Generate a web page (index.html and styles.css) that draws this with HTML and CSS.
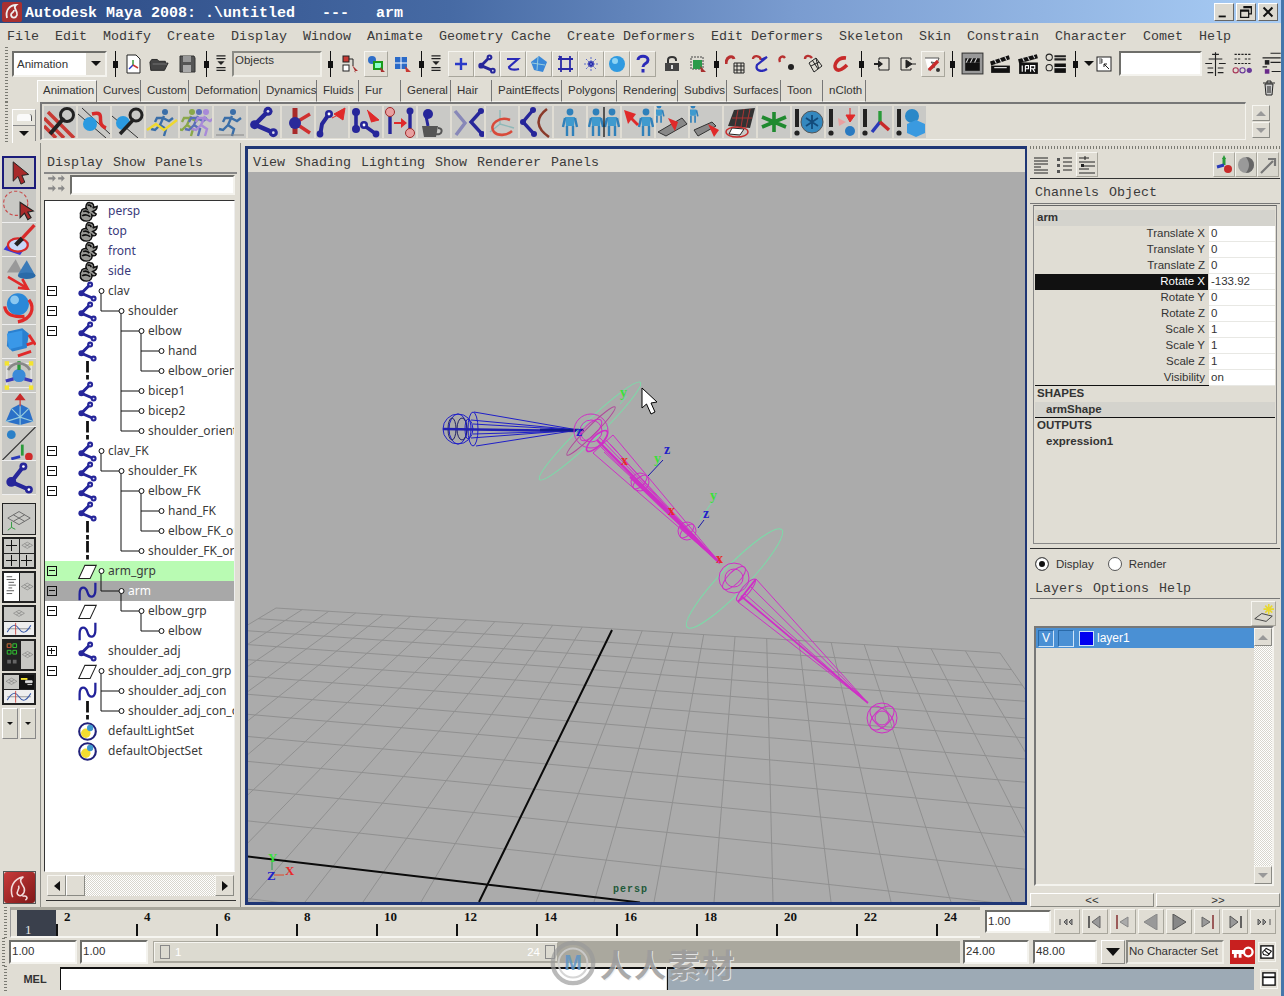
FILE: index.html
```html
<!DOCTYPE html>
<html lang="en">
<head>
<meta charset="utf-8">
<title>Autodesk Maya 2008</title>
<link rel="stylesheet" href="styles.css">
</head>
<body>
<svg class="defs" aria-hidden="true">
  <defs>
    <symbol id="joint" viewBox="0 0 24 24">
      <path d="M15 4 L5 14 L19 20" fill="none" stroke="#26269a" stroke-width="3.4"/>
      <circle cx="15" cy="4" r="3.4" fill="#26269a"/><circle cx="15" cy="4" r="1" fill="#dde"/>
      <circle cx="5" cy="14" r="3.4" fill="#26269a"/>
      <circle cx="19" cy="20" r="3.4" fill="#26269a"/><circle cx="19" cy="20" r="1" fill="#dde"/>
    </symbol>
    <symbol id="cam" viewBox="0 0 24 24">
      <path d="M5 12 C5 9 9 8 11 9 C9 6 11 1 15 2 C19 2 20 6 18 8 L23 6 C23 9 21 11 18 12 L22 15 C21 18 18 17 17 16 C18 20 15 23 11 23 C6 23 3 20 4 16 C3 14 4 13 5 12Z" fill="#9a9a96" stroke="#111" stroke-width="1.7"/>
      <path d="M7 12 C10 11 13 12 14 14 M6 17 C9 15 13 16 15 18 M12 5 C14 4 16 5 16 7" fill="none" stroke="#111" stroke-width="2"/>
    </symbol>
    <symbol id="curve" viewBox="0 0 24 24">
      <path d="M3 22 V15 C3 5 10 6 12 13 C14 20 21 20 21 10 V2" fill="none" stroke="#22229a" stroke-width="2.6"/>
    </symbol>
    <symbol id="group" viewBox="0 0 24 24">
      <path d="M2 20 L9 5 H22 L15 20Z" fill="#fff" stroke="#222" stroke-width="1.2"/>
    </symbol>
    <symbol id="dash" viewBox="0 0 24 24">
      <path d="M12 0 V13 M12 16 V21" stroke="#111" stroke-width="3.2"/>
    </symbol>
    <symbol id="set" viewBox="0 0 24 24">
      <circle cx="12" cy="12" r="9.5" fill="#fff" stroke="#22227a" stroke-width="2.4"/>
      <circle cx="10" cy="14" r="5.4" fill="#f4dc30"/><circle cx="15" cy="8" r="3.6" fill="#3f98cc"/>
    </symbol>
    <symbol id="key" viewBox="0 0 32 32">
      <path d="M0 12 L20 32 M0 20 L12 32 M4 6 L30 32" stroke="#c83a34" stroke-width="3.5"/>
      <path d="M6 28 L20 12" stroke="#222" stroke-width="4"/>
      <circle cx="23" cy="9" r="6.5" fill="none" stroke="#222" stroke-width="3"/>
    </symbol>
    <symbol id="fig" viewBox="0 0 32 32">
      <circle cx="16" cy="6" r="3.4" fill="#2f80ba"/>
      <path d="M11 11 H21 L20 20 H12Z" fill="#3f9ace"/>
      <path d="M11 12 L9 21 M21 12 L23 21 M13 20 V30 M19 20 V30" stroke="#2f80ba" stroke-width="2.4"/>
    </symbol>
    <symbol id="run" viewBox="0 0 32 32">
      <circle cx="19" cy="6" r="3" fill="currentColor"/>
      <path d="M18 10 L14 19 L20 23 L18 30 M14 19 L9 24 L5 23 M17 12 L23 15 L27 12 M17 12 L11 12 L9 16" fill="none" stroke="currentColor" stroke-width="2.4"/>
    </symbol>
    <symbol id="mark" viewBox="0 0 32 32">
      <path d="M5 3 V21" stroke="#222" stroke-width="4"/><circle cx="5" cy="27" r="2.6" fill="#222"/>
    </symbol>
    <symbol id="lst" viewBox="0 0 20 20">
      <path d="M3 3 H17 M3 6 H17 M3 9 H17 M3 12 H10 M3 15 H17 M3 18 H17" stroke="#222" stroke-width="1"/>
    </symbol>
    <symbol id="plane" viewBox="0 0 30 30">
      <path d="M3 14 L15 7 L27 14 L15 21Z M9 10.500 L21 17.500 M21 10.500 L9 17.500" fill="none" stroke="#666" stroke-width="1"/>
    </symbol>
    <symbol id="graph" viewBox="0 0 32 16">
      <path d="M2 8 H30" stroke="#888"/><path d="M2 12 C8 2 12 2 16 8 S24 14 30 4" fill="none" stroke="#3a5aa8" stroke-width="1.2"/><path d="M12 1 V15" stroke="#c83a34"/>
    </symbol>
  </defs>
</svg>

<div class="app">
  <header class="title">
    <svg class="title-logo" viewBox="0 0 20 20"><rect width="20" height="20" rx="2" fill="#a83030"/><path d="M5 16 C3 8 8 3 14 3 C10 6 16 8 15 13 C14 16 10 17 9 13 C9 10 12 11 12 8" fill="none" stroke="#eee" stroke-width="1.8"/></svg>
    <span class="title-text">Autodesk Maya 2008: .\untitled   ---   arm</span>
    <div class="win-btns">
      <span class="win-btn"><svg viewBox="0 0 20 18"><path d="M4 14 H12" stroke="#111" stroke-width="2"/></svg></span>
      <span class="win-btn"><svg viewBox="0 0 20 18"><path d="M7 3 H16 V11 H13 M4 7 H13 V15 H4Z M7 4 H16 M4 8 H13" fill="none" stroke="#111" stroke-width="1.4"/></svg></span>
      <span class="win-btn"><svg viewBox="0 0 20 18"><path d="M5 4 L15 14 M15 4 L5 14" stroke="#111" stroke-width="2.2"/></svg></span>
    </div>
  </header>

  <nav class="menubar mono">
    <span>File</span><span>Edit</span><span>Modify</span><span>Create</span><span>Display</span><span>Window</span><span>Animate</span><span>Geometry Cache</span><span>Create Deformers</span><span>Edit Deformers</span><span>Skeleton</span><span>Skin</span><span>Constrain</span><span>Character</span><span>Comet</span><span>Help</span>
  </nav>

  <div class="status">
    <div class="grip-cell"><i class="grip"></i></div>
    <div class="combo sunken"><span>Animation</span><b class="combo-btn"><i class="tri"></i></b></div>
    <div class="c"><i class="sep"></i></div>
    <div class="c"><svg class="ic" viewBox="0 0 20 20"><path d="M4 1 H13 L17 5 V19 H4Z" fill="#fff" stroke="#222"/><path d="M10 11 V6" stroke="#3a9a3a" stroke-width="1.5"/><path d="M10 11 L6 15" stroke="#2a3ac8" stroke-width="1.5"/><path d="M10 11 L15 14" stroke="#c83a34" stroke-width="1.5"/></svg></div>
    <div class="c"><svg class="ic" viewBox="0 0 22 20"><path d="M1 8 L3 5 H9 L11 7 H18 V9 H21 L17 17 H2Z" fill="#444" stroke="#222"/><path d="M4 10 H20" stroke="#777"/></svg></div>
    <div class="c"><svg class="ic" viewBox="0 0 20 20"><path d="M3 2 H17 L18 4 V18 H3Z" fill="#555" stroke="#333"/><rect x="6" y="2" width="8" height="6" fill="#999"/><rect x="6" y="11" width="8" height="7" fill="#aaa"/></svg></div>
    <div class="c"><i class="sep"></i></div>
    <div class="c"><svg class="ic" viewBox="0 0 14 22"><path d="M2 2 H12 M2 5 H12" stroke="#222" stroke-width="1.4"/><path d="M3 8 H11 L7 12Z" fill="#222"/><path d="M2 15 H12 M2 18 H12" stroke="#222" stroke-width="1.4"/></svg></div>
    <div class="obj sunken-soft">Objects</div>
    <div class="c"><i class="sep"></i></div>
    <div class="c"><svg class="ic" viewBox="0 0 20 20"><rect x="3" y="2" width="6" height="6" fill="#c83a34" stroke="#222"/><rect x="3" y="11" width="6" height="6" fill="#fff" stroke="#222"/><path d="M9 5 H13 V12" fill="none" stroke="#222"/><path d="M12 11 L18 17 L14 17 L16 19Z" fill="#a83030"/></svg></div>
    <div class="c"><span class="tg"><svg class="ic" viewBox="0 0 20 20"><circle cx="6" cy="6" r="4" fill="#2f6ec8"/><rect x="8" y="8" width="8" height="7" fill="#8fc" stroke="#1a9a1a" stroke-width="2"/><path d="M14 13 L19 18 L15 18Z" fill="#a83030"/></svg></span></div>
    <div class="c"><svg class="ic" viewBox="0 0 20 20"><path d="M3 3 H15 V15 H3Z" fill="#2a6ac8"/><path d="M9 3 V15 M3 9 H15" stroke="#fff"/><path d="M13 12 L19 18 L14 18Z" fill="#c83a34"/></svg></div>
    <div class="c"><i class="sep"></i></div>
    <div class="c"><svg class="ic" viewBox="0 0 14 22"><path d="M2 2 H12 M2 5 H12" stroke="#222" stroke-width="1.4"/><path d="M3 8 H11 L7 12Z" fill="#222"/><path d="M2 15 H12 M2 18 H12" stroke="#222" stroke-width="1.4"/></svg></div>
    <i></i>
    <div class="tgb"><svg class="ic" viewBox="0 0 20 20"><path d="M10 4 V16 M4 10 H16" stroke="#2a3ac8" stroke-width="2.4"/></svg></div>
    <div class="tgb"><svg class="ic"><use href="#joint"/></svg></div>
    <div class="tgb"><svg class="ic" viewBox="0 0 20 20"><path d="M4 5 H15 L6 13 C6 16 12 16 16 15" fill="none" stroke="#2a2ab8" stroke-width="2.2"/></svg></div>
    <div class="tgb"><svg class="ic" viewBox="0 0 20 20"><path d="M2 8 L10 2 L18 8 L14 18 L5 16Z" fill="#3a88d8"/><path d="M9 3 L8 16 M3 9 L16 11" stroke="#9cd"/></svg></div>
    <div class="tgb"><svg class="ic" viewBox="0 0 20 20"><path d="M3 5 H18 M3 15 H18 M6 2 V18 M15 2 V18 M6 5 L4 2" fill="none" stroke="#2a2aa8" stroke-width="1.8"/></svg></div>
    <div class="tgb"><svg class="ic" viewBox="0 0 20 20"><circle cx="10" cy="10" r="3" fill="#2a2aa8"/><path d="M10 3 V17 M3 10 H17 M5 5 L15 15 M15 5 L5 15" stroke="#5a6ac8" stroke-dasharray="2 1"/></svg></div>
    <div class="tgb"><svg class="ic" viewBox="0 0 20 20"><circle cx="10" cy="10" r="8" fill="#2f9ae0"/><circle cx="8" cy="7" r="3" fill="#8cd4f4"/></svg></div>
    <div class="tgb"><svg class="ic" viewBox="0 0 20 20"><path d="M5 6 C5 1 15 1 15 6 C15 10 10 9 10 13 M10 15 V18.500" fill="none" stroke="#2a2ab8" stroke-width="3"/></svg></div>
    <div class="c"><svg class="ic" viewBox="0 0 20 20"><path d="M6 9 V6 C6 2 14 2 14 6 V7" fill="none" stroke="#333" stroke-width="2"/><rect x="3" y="9" width="14" height="8" fill="#444"/><rect x="9" y="11" width="2" height="4" fill="#ddd"/></svg></div>
    <div class="c"><svg class="ic" viewBox="0 0 20 20"><rect x="3" y="3" width="12" height="12" fill="none" stroke="#444" stroke-dasharray="2 1"/><rect x="5" y="6" width="9" height="9" fill="#2a9a4a"/><path d="M12 12 L18 18 L13 18Z" fill="#a83030"/></svg></div>
    <div class="c"><i class="sep"></i></div>
    <div class="c"><svg class="ic" viewBox="0 0 20 20"><path d="M1 10 C1 2 8 1 9 5" fill="none" stroke="#b83030" stroke-width="3"/><path d="M9 9 H19 V19 H9Z M12 9 V19 M16 9 V19 M9 12 H19 M9 16 H19" fill="none" stroke="#222"/></svg></div>
    <div class="c"><svg class="ic" viewBox="0 0 20 20"><path d="M2 5 C2 1 9 1 10 6" fill="none" stroke="#b83030" stroke-width="2.4"/><path d="M10 6 L16 3 L6 11 C4 16 10 19 16 15" fill="none" stroke="#2a2ab8" stroke-width="2.2"/></svg></div>
    <div class="c"><svg class="ic" viewBox="0 0 20 20"><path d="M3 8 C1 3 6 1 8 4" fill="none" stroke="#b83030" stroke-width="2.4"/><circle cx="14" cy="13" r="3" fill="#222"/></svg></div>
    <div class="c"><svg class="ic" viewBox="0 0 20 20"><path d="M2 5 C2 1 7 1 9 4" fill="none" stroke="#b83030" stroke-width="2.4"/><path d="M6 9 L13 4 L19 12 L11 18Z M9.500 6.500 L15 15 M13 4.500 L15.500 14 M8 12 L16 8" fill="none" stroke="#222"/></svg></div>
    <div class="c"><svg class="ic" viewBox="0 0 20 20"><path d="M15 4 C6 3 2 12 5 15 C8 18 13 14 16 11" fill="none" stroke="#c82a2a" stroke-width="3.6"/></svg></div>
    <div class="c"><i class="sep"></i></div>
    <div class="c"><svg class="ic" viewBox="0 0 20 20"><path d="M8 4 H18 V16 H8 M8 4 V6 M8 14 V16" fill="none" stroke="#222"/><path d="M3 10 H8" stroke="#222" stroke-width="2"/><path d="M7 6 L12 10 L7 14Z" fill="#222"/></svg></div>
    <div class="c"><svg class="ic" viewBox="0 0 20 20"><path d="M13 4 H3 V16 H13 M13 4 V6 M13 14 V16" fill="none" stroke="#222"/><path d="M8 6 L14 10 L8 14Z M14 10 H18" fill="#222" stroke="#222"/></svg></div>
    <div class="c"><span class="tg"><svg class="ic" viewBox="0 0 20 20"><path d="M2 4 H16 L14 9 L8 8 L12 13 L5 16" fill="#fff" stroke="#555"/><path d="M6 16 L15 7" stroke="#c82a2a" stroke-width="3.2"/><circle cx="15" cy="16" r="2" fill="#333"/></svg></span></div>
    <div class="c"><i class="sep"></i></div>
    <div class="c"><svg class="ic-l" viewBox="0 0 24 24"><rect x="2" y="2" width="20" height="20" fill="#999" stroke="#333"/><rect x="5" y="11" width="14" height="8" fill="#111"/><path d="M5 7 L19 7 L19 11 L5 11Z" fill="#111"/><path d="M8 7 L6 11 M12 7 L10 11 M16 7 L14 11" stroke="#ddd"/></svg></div>
    <div class="c"><svg class="ic-l" viewBox="0 0 24 24"><path d="M2 10 L20 4 L21 8 L3 14Z" fill="#111"/><path d="M6 8 L8 12 M11 7 L13 11 M16 5 L18 9" stroke="#ddd"/><rect x="3" y="14" width="18" height="7" fill="#111"/><path d="M6 16 H18" stroke="#fff"/></svg></div>
    <div class="c"><svg class="ic-l" viewBox="0 0 24 24"><path d="M2 8 L20 3 L21 7 L3 12Z" fill="#111"/><path d="M6 6 L8 10 M11 5 L13 9 M16 3 L18 7" stroke="#ddd"/><rect x="3" y="11" width="18" height="11" fill="#111"/><path d="M6 14 V20 M9 14 V20 H9 M9 14 H12 V17 H9 M14 20 V14 H18 V17 H14 M16 17 L18 20" fill="none" stroke="#fff" stroke-width="1.100"/></svg></div>
    <div class="c"><svg class="ic-l" viewBox="0 0 24 24"><circle cx="5" cy="6" r="3" fill="none" stroke="#222"/><circle cx="5" cy="16" r="3" fill="none" stroke="#222"/><path d="M10 5 H21 M10 8 H21" stroke="#222" stroke-width="2"/><rect x="10" y="12" width="11" height="9" fill="#111"/><path d="M10 16 H21" stroke="#fff"/></svg></div>
    <div class="c"><i class="sep"></i></div>
    <div class="c rv"><i class="tri"></i><svg class="ic-s" viewBox="0 0 16 16"><rect x="1" y="1" width="14" height="14" fill="#fff" stroke="#222"/><path d="M3 3 H6 V7 H3 M6 5 H3" fill="none" stroke="#222" stroke-width=".8"/><path d="M8 8 L13 13 M8 8 H11 M8 8 V11" stroke="#222"/></svg></div>
    <div class="quick sunken"></div>
    <div class="c"><svg class="ic-l" viewBox="0 0 22 22"><path d="M8 3 H14 M5 7 H17 M2 11 H8 M14 11 H20 M4 15 H9 M13 15 H18 M4 19 H9 M13 19 H18 M11 1 V22" stroke="#222"/></svg></div>
    <div class="c"><svg class="ic-l" viewBox="0 0 22 22"><path d="M4 3 H18 M4 7 H9 M13 7 H18 M4 11 H18" stroke="#222" stroke-dasharray="2 1"/><circle cx="5" cy="17" r="2.3" fill="none" stroke="#a83a5a"/><circle cx="11" cy="17" r="2.3" fill="none" stroke="#6a3a9a"/><circle cx="17" cy="17" r="2.3" fill="#6a3a9a"/></svg></div>
    <div class="c"><svg class="ic-l" viewBox="0 0 22 22"><path d="M11 2 H20 M4 6 H20 M11 10 H20 M4 14 H8 M12 18 H20" stroke="#222"/><rect x="6" y="8" width="4" height="4" fill="#222"/><rect x="6" y="16" width="4" height="4" fill="#6a2a8a"/></svg></div>
  </div>

  <div class="tabsrow">
    <div class="grip-cell"><i class="grip"></i></div>
    <div class="tabs">
      <span class="tab active">Animation</span><span class="tab">Curves</span><span class="tab">Custom</span><span class="tab">Deformation</span><span class="tab">Dynamics</span><span class="tab">Fluids</span><span class="tab">Fur</span><span class="tab">General</span><span class="tab">Hair</span><span class="tab">PaintEffects</span><span class="tab">Polygons</span><span class="tab">Rendering</span><span class="tab">Subdivs</span><span class="tab">Surfaces</span><span class="tab">Toon</span><span class="tab">nCloth</span>
    </div>
    <svg class="trash" viewBox="0 0 14 16"><path d="M3 4 H11 L10 15 H4Z M1 3 H13 M5 3 V1 H9 V3 M6 6 V13 M8 6 V13" fill="#ccc" stroke="#222"/></svg>
  </div>

  <div class="shelfrow">
    <div class="grip-cell"><i class="grip"></i></div>
    <div class="shelf-menu"><b class="shelf-a"></b><b class="shelf-b"><i class="tri"></i></b></div>
    <div class="shelf">
      <svg class="si"><use href="#key"/></svg>
      <svg class="si" viewBox="0 0 32 32"><path d="M0 8 L28 32 M4 2 L32 28" stroke="#333"/><circle cx="12" cy="18" r="7" fill="#2a9ae0"/><path d="M14 8 C30 4 16 18 28 22" fill="none" stroke="#d82a2a" stroke-width="3.5"/></svg>
      <svg class="si" viewBox="0 0 32 32"><path d="M0 10 L26 32" stroke="#333"/><circle cx="11" cy="17" r="7" fill="#2a9ae0"/><path d="M8 28 L22 13" stroke="#222" stroke-width="3.5"/><circle cx="24" cy="9" r="6" fill="none" stroke="#222" stroke-width="3"/></svg>
      <svg class="si run-blue" viewBox="0 0 32 32"><use href="#run"/><path d="M1 24 L10 18 L18 24 L31 14" fill="none" stroke="#eed830" stroke-width="2.4"/></svg>
      <svg class="si" viewBox="0 0 32 32"><use href="#run" x="-7" class="run-green"/><use href="#run" class="run-navy"/><use href="#run" x="7" class="run-purple"/></svg>
      <svg class="si run-blue" viewBox="0 0 32 32"><use href="#run"/><path d="M2 29 H30" stroke="#888"/></svg>
      <svg class="si"><use href="#joint"/></svg>
      <svg class="si" viewBox="0 0 32 32"><path d="M13 2 L13 28" stroke="#a82a2a" stroke-width="5"/><path d="M13 17 L28 8 M13 17 L28 27" stroke="#d03030" stroke-width="3.4"/><circle cx="13" cy="17" r="6" fill="#2a2a9a"/></svg>
      <svg class="si" viewBox="0 0 32 32"><path d="M13 8 L6 18 L4 30" fill="none" stroke="#26269a" stroke-width="4"/><circle cx="13" cy="8" r="4" fill="#26269a"/><circle cx="13" cy="8" r="1.400" fill="#fff"/><circle cx="4" cy="28" r="3.4" fill="#26269a"/><path d="M18 8 L29 2 L27 14Z M16 12 L24 8" fill="#e02a2a" stroke="#e02a2a"/></svg>
      <svg class="si" viewBox="0 0 32 32"><path d="M6 5 L6 22 M12 18 L26 28" stroke="#26269a" stroke-width="3.6"/><circle cx="6" cy="6" r="4" fill="#26269a"/><circle cx="6" cy="23" r="4" fill="#26269a"/><circle cx="14" cy="19" r="4" fill="#26269a"/><circle cx="14" cy="19" r="1.400" fill="#fff"/><circle cx="26" cy="28" r="3.4" fill="#26269a"/><path d="M17 4 L29 14 L21 16 M18 6 L26 12" fill="#e02a2a" stroke="#e02a2a"/></svg>
      <svg class="si" viewBox="0 0 32 32"><path d="M6 6 V28 M26 6 V28" stroke="#26269a" stroke-width="3.4"/><circle cx="6" cy="6" r="4.500" fill="#e8a0a0" stroke="#a02a2a"/><circle cx="26" cy="5" r="3.500" fill="#26269a"/><circle cx="26" cy="27" r="4.500" fill="#e8a0a0" stroke="#a02a2a"/><path d="M10 16 H17 V12 L23 17 L17 22 V18 H10Z" fill="#e02a2a"/></svg>
      <svg class="si" viewBox="0 0 32 32"><path d="M8 10 L10 20" stroke="#26269a" stroke-width="3"/><circle cx="10" cy="8" r="5" fill="#26269a"/><path d="M4 20 H20 L18 31 H6Z" fill="#555"/><path d="M20 22 C26 22 24 30 18 28" fill="none" stroke="#555" stroke-width="2"/></svg>
      <svg class="si" viewBox="0 0 32 32"><path d="M3 5 L13 17 L4 29" fill="none" stroke="#8888b8" stroke-width="3.4"/><path d="M29 5 L19 16 L30 28" fill="none" stroke="#26269a" stroke-width="3.4"/><circle cx="29" cy="5" r="3" fill="#26269a"/><circle cx="30" cy="28" r="3" fill="#26269a"/></svg>
      <svg class="si" viewBox="0 0 32 32"><path d="M14 18 L14 4 M14 18 L4 26 M14 18 L28 22" stroke="#8fb8b8" stroke-width="1.400"/><path d="M24 14 C14 10 2 18 8 26 C12 30 20 30 26 25" fill="none" stroke="#d84a3a" stroke-width="2.6"/></svg>
      <svg class="si" viewBox="0 0 32 32"><path d="M13 4 L3 16 L14 28" fill="none" stroke="#26269a" stroke-width="3.4"/><circle cx="13" cy="4" r="3" fill="#26269a"/><circle cx="3" cy="16" r="3" fill="#26269a"/><circle cx="14" cy="28" r="3" fill="#26269a"/><path d="M27 3 C15 12 16 22 29 31" fill="none" stroke="#8a3a2a" stroke-width="2.6"/></svg>
      <svg class="si"><use href="#fig"/></svg>
      <svg class="si" viewBox="0 0 32 32"><use href="#fig" x="-8" width="32" height="32"/><use href="#fig" x="8" width="32" height="32"/><path d="M16 1 V31" stroke="#222" stroke-width="1.400"/></svg>
      <svg class="si" viewBox="0 0 32 32"><use href="#fig" x="8" width="32" height="32"/><path d="M2 4 L14 8 L11 12 L17 18 L15 20 L9 14 L6 18Z" fill="#e02a2a"/></svg>
      <svg class="si" viewBox="0 0 32 32"><use href="#fig" x="-8" y="-4" width="22" height="22"/><path d="M2 26 L26 12 L31 18 L10 30Z" fill="#888" stroke="#333"/><path d="M12 12 L22 16 L19 25 L16 20Z" fill="#e02a2a"/></svg>
      <svg class="si" viewBox="0 0 32 32"><use href="#fig" x="-8" y="-4" width="22" height="22"/><path d="M4 24 L22 16 L26 20 L8 30Z" fill="#888" stroke="#333"/><path d="M18 18 L29 24 L24 31Z" fill="#e02a2a"/></svg>
      <svg class="si" viewBox="0 0 32 32"><path d="M10 4 L31 2 L26 22 L4 20Z" fill="#333"/><path d="M14 4 L11 20 M20 3 L17 21 M26 3 L22 22 M8 12 L28 12" stroke="#a33"/><path d="M8 22 L20 23 L16 29 L5 28Z" fill="#fff" stroke="#222"/><ellipse cx="13" cy="26" rx="11" ry="5" fill="none" stroke="#c82a2a" stroke-width="1.400"/></svg>
      <svg class="si" viewBox="0 0 32 32"><path d="M16 6 V26 M4 11 L28 21 M4 21 L28 11" stroke="#1f8a2f" stroke-width="3.6"/></svg>
      <svg class="si" viewBox="0 0 32 32"><use href="#mark"/><circle cx="20" cy="16" r="11" fill="#3488bf" stroke="#555"/><path d="M20 9 V23 M14 12 L26 20 M14 20 L26 12" stroke="#124a7a" stroke-width="1.800"/></svg>
      <svg class="si" viewBox="0 0 32 32"><use href="#mark"/><circle cx="24" cy="25" r="5" fill="#2a7ac0"/><path d="M12 12 L20 16 L13 20Z" fill="#e8a0a0"/><path d="M24 2 V12 M20 9 L24 16 L29 9Z" fill="#e02a2a" stroke="#e02a2a"/></svg>
      <svg class="si" viewBox="0 0 32 32"><use href="#mark"/><path d="M20 16 V5" stroke="#2a9a3a" stroke-width="3.4"/><path d="M20 16 L12 26" stroke="#2a3ab8" stroke-width="3.4"/><path d="M20 16 L29 24" stroke="#c82a2a" stroke-width="3.4"/></svg>
      <svg class="si" viewBox="0 0 32 32"><use href="#mark"/><circle cx="18" cy="10" r="7" fill="#2a88c8"/><path d="M13 18 L22 14 L31 18 V27 L22 31 L13 27Z" fill="#3a9ae0"/></svg>
    </div>
    <div class="shelf-scroll"><b class="up-btn"><i class="tri-u"></i></b><b class="up-btn"><i class="tri-d"></i></b></div>
  </div>

  <main class="main">
    <aside class="tools">
      <div class="tool sel"><svg viewBox="0 0 30 30"><path d="M9 4 L9 24 L14 19 L17 27 L21 25 L18 18 L25 17Z" fill="#a82a2a" stroke="#222"/></svg></div>
      <div class="tool"><svg viewBox="0 0 30 30"><ellipse cx="12" cy="13" rx="11" ry="11" fill="none" stroke="#c84a4a" stroke-dasharray="3 2"/><path d="M16 12 L16 26 L20 22 L23 28 L26 26 L23 21 L28 20Z" fill="#a82a2a" stroke="#222"/></svg></div>
      <div class="tool"><svg viewBox="0 0 30 30"><path d="M1 24 L9 14 L24 18 L16 29Z" fill="#3a3ad8"/><ellipse cx="14" cy="20" rx="9" ry="6" fill="#c8d8f8" stroke="#d82a2a" stroke-width="2"/><path d="M14 18 L29 2" stroke="#d82a2a" stroke-width="3"/><path d="M12 20 L18 14" stroke="#222" stroke-width="4"/></svg></div>
      <div class="tool"><svg viewBox="0 0 30 30"><path d="M4 14 L12 2 L18 14Z" fill="#999"/><path d="M14 16 L22 3 L30 17Z" fill="#3a7ab8"/><ellipse cx="22" cy="17" rx="8" ry="3" fill="#2a6aa8"/><path d="M5 18 L22 28 M18 20 L23 29 L14 28" fill="none" stroke="#e02a2a" stroke-width="2.400"/></svg></div>
      <div class="tool"><svg viewBox="0 0 30 30"><circle cx="14" cy="12" r="10" fill="#2a88d8"/><circle cx="11" cy="8" r="4" fill="#8cc8f0"/><path d="M2 14 C3 22 10 24 20 23 M24 8 C30 16 26 26 14 28" fill="none" stroke="#e02a2a" stroke-width="3"/></svg></div>
      <div class="tool"><svg viewBox="0 0 30 30"><path d="M5 6 L18 3 L24 8 L22 21 L9 24 L4 19Z" fill="#2a80d0"/><path d="M4 8 L18 5 L18 19 L6 22Z" fill="#3a98e8"/><path d="M24 9 L30 18 M22 18 L28 16 M14 28 L26 24" stroke="#e02a2a" stroke-width="2.600"/></svg></div>
      <div class="tool"><svg viewBox="0 0 30 30"><rect x="4" y="4" width="22" height="22" fill="none" stroke="#eee"/><circle cx="15" cy="15" r="6" fill="#3a8ad8"/><path d="M15 2 V10" stroke="#2a9a3a" stroke-width="3"/><path d="M3 20 L10 18" stroke="#3a3ab8" stroke-width="3"/><path d="M20 18 L27 20" stroke="#3a3ab8" stroke-width="3"/><path d="M5 10 C10 2 20 2 25 10" fill="none" stroke="#888" stroke-width="2.400"/><g fill="#f4e430"><rect x="2" y="2" width="4" height="4"/><rect x="24" y="2" width="4" height="4"/><rect x="2" y="24" width="4" height="4"/><rect x="24" y="24" width="4" height="4"/></g></svg></div>
      <div class="tool"><svg viewBox="0 0 30 30"><path d="M3 26 L8 14 L16 10 L24 14 L28 26 L16 29Z" fill="#2a70c8"/><path d="M8 14 L16 22 L24 14 M16 10 V29 M3 26 L16 22 L28 26" stroke="#9cd" fill="none"/><path d="M16 12 V4 M12 6 L16 1 L20 6Z" fill="#c82a2a" stroke="#c82a2a"/></svg></div>
      <div class="tool"><svg viewBox="0 0 30 30"><circle cx="8" cy="7" r="4" fill="#2a80c8"/><path d="M0 30 L30 0" stroke="#333"/><path d="M18 16 V26" stroke="#2a9a3a" stroke-width="2.500"/><path d="M16 27 L8 29" stroke="#2a3ab8" stroke-width="2.500"/><circle cx="24" cy="27" r="3.500" fill="#d02a2a"/></svg></div>
      <div class="tool"><svg viewBox="0 0 30 30"><path d="M19 5 L8 19 L24 26" fill="none" stroke="#26269a" stroke-width="3.800"/><circle cx="19" cy="5" r="3.600" fill="#26269a"/><circle cx="19" cy="5" r="1.200" fill="#fff"/><circle cx="8" cy="19" r="4.500" fill="#26269a"/><circle cx="24" cy="26" r="3.600" fill="#26269a"/><circle cx="24" cy="26" r="1.200" fill="#fff"/></svg></div>
      <div class="layouts">
        <div class="lay"><svg viewBox="0 0 30 30"><use href="#plane"/><path d="M7 24 V18 M7 24 L3 27 M7 24 L11 26" stroke="#2a9a3a"/></svg></div>
        <div class="lay grid4"><i class="pl cross"></i><i class="pl"><svg viewBox="0 0 30 30"><use href="#plane"/></svg></i><i class="pl cross"></i><i class="pl cross"></i></div>
        <div class="lay two-h"><i class="white-l"><svg viewBox="0 0 14 30"><path d="M2 4 H8 M2 7 H12 M4 10 H10 M4 13 H12 M4 16 H8 M2 19 H10 M2 22 H8" stroke="#555"/></svg></i><i><svg viewBox="0 0 30 30"><use href="#plane"/></svg></i></div>
        <div class="lay two-v"><i><svg viewBox="0 0 30 30"><use href="#plane"/></svg></i><i class="wh"><svg viewBox="0 0 32 16"><use href="#graph"/></svg></i></div>
        <div class="lay two-h"><i class="dark-l"><svg viewBox="0 0 14 30"><path d="M2 3 H6 V7 H2Z M8 3 H12 V7 H8Z M2 10 H6 V14 H2Z M8 10 H12 V14 H8Z" fill="none" stroke="#3c3"/><path d="M2 3 H6 V7 H2Z" fill="none" stroke="#c33"/><path d="M2 20 H6 V24 H2Z M8 20 H12 V24 H8Z" fill="#666"/></svg></i><i><svg viewBox="0 0 30 30"><use href="#plane"/></svg></i></div>
        <div class="lay two-v"><i class="sub-h"><svg viewBox="0 0 30 30"><use href="#plane"/></svg><b class="black-box"><svg viewBox="0 0 16 12"><path d="M2 2 H9 V4 H2Z" fill="#f4e430"/><path d="M7 5 H14 V7 H7Z M9 9 H14" fill="#ddd" stroke="#ddd"/></svg></b></i><i class="wh"><svg viewBox="0 0 32 16"><use href="#graph"/></svg></i></div>
        <div class="lay-arrows"><b><i class="tri-s"></i></b><b><i class="tri-s"></i></b></div>
      </div>
      <div class="logo"><svg viewBox="0 0 32 32"><defs><linearGradient id="lg" x1="0" y1="0" x2="1" y2="1"><stop offset="0" stop-color="#c83a3a"/><stop offset="1" stop-color="#801818"/></linearGradient></defs><rect width="32" height="32" rx="3" fill="url(#lg)"/><path d="M9 26 C5 16 10 7 20 5 C14 9 19 12 21 17 C22 22 17 27 14 23 C12 20 17 18 15 14 M19 25 C24 24 25 27 22 29" fill="none" stroke="#f2dcdc" stroke-width="1.600"/></svg></div>
    </aside>

    <section class="outliner">
      <div class="pmenu mono out-menu"><span>Display</span><span>Show</span><span>Panels</span></div>
      <div class="filter">
        <svg class="filter-ic" viewBox="0 0 18 18"><path d="M1 2 H5 V0 L8 3 L5 6 V4 H1Z M10 2 H13 V0 L16 3 L13 6 V4 H10Z M1 11 H5 V9 L8 12 L5 15 V13 H1Z M10 11 H13 V9 L16 12 L13 15 V13 H10Z" fill="#888"/></svg>
        <div class="filter-in sunken"></div>
      </div>
      <div class="listbox">
        <div class="rows">
          <div class="row d0"><i class="nx"></i><svg class="ri"><use href="#cam"/></svg><span class="nm blue">persp</span></div>
          <div class="row d0"><i class="nx"></i><svg class="ri"><use href="#cam"/></svg><span class="nm blue">top</span></div>
          <div class="row d0"><i class="nx"></i><svg class="ri"><use href="#cam"/></svg><span class="nm blue">front</span></div>
          <div class="row d0"><i class="nx"></i><svg class="ri"><use href="#cam"/></svg><span class="nm blue">side</span></div>
          <div class="row d0"><i class="ex"></i><svg class="ri"><use href="#joint"/></svg><span class="nm">clav</span></div>
          <div class="row d1"><i class="ex"></i><svg class="ri"><use href="#joint"/></svg><span class="nm">shoulder</span></div>
          <div class="row d2"><i class="ex"></i><svg class="ri"><use href="#joint"/></svg><span class="nm">elbow</span></div>
          <div class="row d3"><i class="nx"></i><svg class="ri"><use href="#joint"/></svg><span class="nm">hand</span></div>
          <div class="row d3"><i class="nx"></i><svg class="ri"><use href="#dash"/></svg><span class="nm">elbow_orient</span></div>
          <div class="row d2"><i class="nx"></i><svg class="ri"><use href="#joint"/></svg><span class="nm">bicep1</span></div>
          <div class="row d2"><i class="nx"></i><svg class="ri"><use href="#joint"/></svg><span class="nm">bicep2</span></div>
          <div class="row d2"><i class="nx"></i><svg class="ri"><use href="#dash"/></svg><span class="nm">shoulder_orient</span></div>
          <div class="row d0"><i class="ex"></i><svg class="ri"><use href="#joint"/></svg><span class="nm">clav_FK</span></div>
          <div class="row d1"><i class="ex"></i><svg class="ri"><use href="#joint"/></svg><span class="nm">shoulder_FK</span></div>
          <div class="row d2"><i class="ex"></i><svg class="ri"><use href="#joint"/></svg><span class="nm">elbow_FK</span></div>
          <div class="row d3"><i class="nx"></i><svg class="ri"><use href="#joint"/></svg><span class="nm">hand_FK</span></div>
          <div class="row d3"><i class="nx"></i><svg class="ri"><use href="#dash"/></svg><span class="nm">elbow_FK_orient</span></div>
          <div class="row d2"><i class="nx"></i><svg class="ri"><use href="#dash"/></svg><span class="nm">shoulder_FK_orient</span></div>
          <div class="row d0 green"><i class="ex"></i><svg class="ri"><use href="#group"/></svg><span class="nm">arm_grp</span></div>
          <div class="row d1 picked"><i class="ex"></i><svg class="ri"><use href="#curve"/></svg><span class="nm">arm</span></div>
          <div class="row d2"><i class="ex"></i><svg class="ri"><use href="#group"/></svg><span class="nm">elbow_grp</span></div>
          <div class="row d3"><i class="nx"></i><svg class="ri"><use href="#curve"/></svg><span class="nm">elbow</span></div>
          <div class="row d0"><i class="ex plus"></i><svg class="ri"><use href="#joint"/></svg><span class="nm">shoulder_adj</span></div>
          <div class="row d0"><i class="ex"></i><svg class="ri"><use href="#group"/></svg><span class="nm">shoulder_adj_con_grp</span></div>
          <div class="row d1"><i class="nx"></i><svg class="ri"><use href="#curve"/></svg><span class="nm">shoulder_adj_con</span></div>
          <div class="row d1"><i class="nx"></i><svg class="ri"><use href="#dash"/></svg><span class="nm">shoulder_adj_con_orient</span></div>
          <div class="row d0"><i class="nx"></i><svg class="ri"><use href="#set"/></svg><span class="nm">defaultLightSet</span></div>
          <div class="row d0"><i class="nx"></i><svg class="ri"><use href="#set"/></svg><span class="nm">defaultObjectSet</span></div>
        </div>
        <svg class="tree" viewBox="44 202 189 600">
          <path d="M100 292 V312 H120 V432 H140 M120 332 H140 V372 H160 M140 352 H160 M120 392 H140 M120 412 H140 M100 452 V472 H120 V552 H140 M120 492 H140 V532 H160 M140 512 H160 M100 572 V592 H120 V612 H140 V632 H160 M100 672 V712 H120 M100 692 H120" fill="none" stroke="#111"/>
          <g fill="#fff" stroke="#111">
            <circle cx="100.500" cy="292" r="2.500"/><circle cx="120.500" cy="312" r="2.500"/><circle cx="140.500" cy="332" r="2.500"/><circle cx="160.500" cy="352" r="2.500"/><circle cx="160.500" cy="372" r="2.500"/><circle cx="140.500" cy="392" r="2.500"/><circle cx="140.500" cy="412" r="2.500"/><circle cx="140.500" cy="432" r="2.500"/>
            <circle cx="100.500" cy="452" r="2.500"/><circle cx="120.500" cy="472" r="2.500"/><circle cx="140.500" cy="492" r="2.500"/><circle cx="160.500" cy="512" r="2.500"/><circle cx="160.500" cy="532" r="2.500"/><circle cx="140.500" cy="552" r="2.500"/>
            <circle cx="100.500" cy="572" r="2.500"/><circle cx="120.500" cy="592" r="2.500"/><circle cx="140.500" cy="612" r="2.500"/><circle cx="160.500" cy="632" r="2.500"/>
            <circle cx="100.500" cy="672" r="2.500"/><circle cx="120.500" cy="692" r="2.500"/><circle cx="120.500" cy="712" r="2.500"/>
          </g>
        </svg>
      </div>
      <div class="hscroll"><b class="up-btn"><i class="tri-l"></i></b><b class="thumb"></b><span class="track"></span><b class="up-btn"><i class="tri-r"></i></b></div>
      <div class="foot-line"></div>
    </section>

    <section class="viewport">
      <div class="pmenu mono wide"><span>View</span><span>Shading</span><span>Lighting</span><span>Show</span><span>Renderer</span><span>Panels</span></div>
      <svg class="view3d" viewBox="248 172 777 730">
        <g stroke="#909090" stroke-width="1" fill="none">
          <path d="M276 608 L1000 653 M258 618.700 L1011 669.500 M248 630.800 L1022 685 M248 644.600 L1030 701.600 M248 659.700 L1030 719.100 M248 676.100 L1030 738.200 M248 694.300 L1030 759.400 M248 714.300 L1030 782.600 M248 736.500 L1030 808.500 M248 761.400 L1030 837.400 M248 789.300 L1030 869.700 M248 820.900 L1030 906.500 M248 898.500 L280 902.500"/>
          <path d="M276 608 L-214 902 M302.200 609.600 L-156.500 902 M328.800 611.300 L-98.800 902 M355.700 613 L-41 902 M382.900 614.700 L17 902 M410.300 616.400 L74.500 902 M438.200 618.200 L132.400 902 M466.300 619.900 L190 902 M494.800 621.700 L247.700 902 M523.500 623.400 L305 902 M552.700 625.200 L363 902 M582.200 627.100 L421 902 M642.200 630.700 L536 902 M672.800 632.600 L594 902 M703.700 634.500 L654 902 M735 636.500 L714 902 M766.700 638.500 L773 902 M798.800 640.500 L831 902 M831.200 642.500 L891 902 M864.200 644.600 L951 902 M897.600 646.700 L1012 902 M931.200 648.800 L1060 902 M965.400 650.900 L1114 902 M1000 653 L1172 902"/>
        </g>
        <path d="M612 630 L479 902 M248 856.600 L640 902.500" stroke="#0a0a0a" stroke-width="2" fill="none"/>

        <g fill="none" stroke="#1f1fc8">
          <circle cx="458" cy="429" r="15"/><ellipse cx="458" cy="429" rx="9" ry="15"/><ellipse cx="462" cy="429" rx="5" ry="11" stroke="#222266"/><ellipse cx="452" cy="429" rx="4" ry="11" stroke="#222266"/><ellipse cx="473" cy="429" rx="5" ry="17"/><ellipse cx="468" cy="429" rx="3" ry="10"/>
          <path d="M474 412 L578 430 L476 446 M471 420 L578 430 L471 438 M473 424 L578 430 M473 434 L578 431"/><path d="M443 429 L578 431" stroke-width="2.600" stroke="#2020b0"/>
          <path d="M540 430 H584" stroke="#111a8a" stroke-width="2.400"/>
        </g>
        <ellipse cx="590" cy="431" rx="70" ry="9" transform="rotate(-44 590 431)" fill="none" stroke="#7adca8"/>
        <ellipse cx="734.500" cy="578.500" rx="68" ry="13" transform="rotate(-46 734.500 578.500)" fill="none" stroke="#7adca8"/>
        <g fill="none" stroke="#cf2fc6">
          <circle cx="591" cy="431" r="17"/><circle cx="591" cy="431" r="11"/><ellipse cx="591" cy="431" rx="34" ry="4.500" transform="rotate(-45 591 431)" stroke="#b04a9a"/><ellipse cx="591" cy="430" rx="14" ry="6" transform="rotate(-45 591 430)"/>
          <path d="M593 453 L613 435 L720 563 Z M600 446 L720 563 M606 440 L720 563 M599 437 L720 563"/><path d="M597 440 L720 563" stroke-width="2.400"/><path d="M604 452 L690 532 M610 444 L680 522"/>
          <ellipse cx="597" cy="441" rx="14" ry="5" transform="rotate(-45 597 441)" stroke-width="1.600"/>
          <circle cx="640" cy="482" r="9"/><ellipse cx="640" cy="482" rx="9" ry="4" transform="rotate(-45 640 482)"/><path d="M630 477 L720 563" stroke-width="2"/>
          <circle cx="687" cy="531" r="9"/><ellipse cx="687" cy="531" rx="9" ry="4" transform="rotate(-45 687 531)"/><path d="M680 526 L718 561" stroke-width="2.600"/>
          <circle cx="734" cy="578" r="15"/><circle cx="734" cy="578" r="9"/><ellipse cx="734" cy="578" rx="15" ry="6" transform="rotate(-45 734 578)"/>
          <path d="M738 602 L756 579 L868 703 Z M745 594 L868 703 M750 586 L868 703"/><path d="M741 596 L868 703" stroke-width="1.800"/><path d="M738 602 L756 579" stroke-width="2"/><ellipse cx="746" cy="590" rx="14" ry="4" transform="rotate(-50 746 590)"/>
          <circle cx="882" cy="718" r="15"/><circle cx="882" cy="718" r="7"/><ellipse cx="882" cy="718" rx="15" ry="8" transform="rotate(45 882 718)"/><ellipse cx="882" cy="718" rx="15" ry="8" transform="rotate(-45 882 718)"/>
        </g>
        <path d="M648 476 L663 460 M698 528 L704 520" stroke="#1a1aa8" fill="none"/><path d="M620 404 L627 396 M700 520 L712 502" stroke="#7adca8" fill="none"/>
        <g class="ax">
          <text x="620" y="397" class="ay">y</text><text x="654" y="463" class="ay">y</text><text x="710" y="500" class="ay">y</text>
          <text x="664" y="454" class="az">z</text><text x="703" y="518" class="az">z</text><text x="576" y="436" class="az">z</text>
          <text x="621" y="465" class="ar">x</text><text x="668" y="515" class="ar">x</text><text x="716" y="563" class="ar">x</text>
        </g>
        <path d="M642 388 V408 L646.500 404 L651 414 L655 412 L651 403 L657 402Z" fill="#fff" stroke="#000"/>
        <path d="M272 860 V870" stroke="#2aa050" fill="none"/><path d="M274 875 H284" stroke="#e04a2a"/>
        <text x="268" y="862" class="ay big">Y</text><text x="267" y="880" class="az big">Z</text><text x="285" y="875" class="ar big">X</text>
        <text x="613" y="892" class="persp">persp</text>
      </svg>
    </section>

    <aside class="right">
      <div class="grip-h"></div>
      <div class="cb-tools">
        <svg class="ic"><use href="#lst"/></svg>
        <svg class="ic" viewBox="0 0 20 20"><path d="M9 3 H18 M9 7 H18 M9 11 H18 M9 15 H18" stroke="#222"/><path d="M3 3 H6 V6 H3Z M3 9 H6 V12 H3Z M3 15 H6 V18 H3Z" fill="#555"/></svg>
        <span class="tg2"><svg class="ic" viewBox="0 0 20 20"><path d="M2 3 H12 M2 7 H18 M2 14 H12 M2 18 H18 M8 1 V5 M6 11 H18" stroke="#222"/><rect x="4" y="9" width="3" height="3" fill="#222"/></svg></span>
        <i class="fill"></i>
        <div class="rbs">
          <span class="rb"><svg class="ic" viewBox="0 0 20 20"><path d="M10 10 V3" stroke="#2a9a3a" stroke-width="3"/><path d="M10 10 L3 12" stroke="#2a3ab8" stroke-width="3"/><circle cx="14" cy="14" r="4" fill="#c82a2a"/><path d="M8 4 L10 0 L12 4Z" fill="#2a9a3a"/></svg></span>
          <span class="rb"><svg class="ic" viewBox="0 0 20 20"><circle cx="10" cy="10" r="8" fill="#999"/><path d="M10 2 A8 8 0 0 1 10 18 C14 12 14 8 10 2Z" fill="#666"/></svg></span>
          <span class="rb"><svg class="ic" viewBox="0 0 20 20"><path d="M3 18 L15 6 M10 4 H17 V11" fill="none" stroke="#777" stroke-width="2.200"/></svg></span>
        </div>
      </div>
      <div class="pmenu mono cb-menu"><span>Channels</span><span>Object</span></div>
      <div class="cb">
        <div class="cb-head">arm</div>
        <div class="ch"><label>Translate X</label><span>0</span></div>
        <div class="ch"><label>Translate Y</label><span>0</span></div>
        <div class="ch"><label>Translate Z</label><span>0</span></div>
        <div class="ch hot"><label>Rotate X</label><span>-133.92</span></div>
        <div class="ch"><label>Rotate Y</label><span>0</span></div>
        <div class="ch"><label>Rotate Z</label><span>0</span></div>
        <div class="ch"><label>Scale X</label><span>1</span></div>
        <div class="ch"><label>Scale Y</label><span>1</span></div>
        <div class="ch"><label>Scale Z</label><span>1</span></div>
        <div class="ch last"><label>Visibility</label><span>on</span></div>
        <div class="cb-sec">SHAPES</div>
        <div class="cb-shape">armShape</div>
        <div class="cb-sec">OUTPUTS</div>
        <div class="cb-item">expression1</div>
      </div>
      <div class="layers">
        <div class="radios"><label class="rad on">Display</label><label class="rad">Render</label></div>
        <div class="pmenu mono ly-menu"><span>Layers</span><span>Options</span><span>Help</span></div>
        <div class="ly-tool"><span class="rb newlayer"><svg viewBox="0 0 24 24"><path d="M2 18 L10 12 L22 15 L15 21Z" fill="none" stroke="#333"/><path d="M18 1 V13 M12 7 H24 M14 3 L22 11 M22 3 L14 11" stroke="#e8d830" stroke-width="1.800"/></svg></span></div>
        <div class="ly-list">
          <div class="ly-main">
            <div class="ly-row"><b class="cell">V</b><b class="cell"></b><b class="swatch"></b><span>layer1</span></div>
          </div>
          <div class="vscroll"><b class="up-btn"><i class="tri-u"></i></b><span class="track"></span><b class="up-btn"><i class="tri-d"></i></b></div>
        </div>
        <div class="pager"><b>&lt;&lt;</b><b>&gt;&gt;</b></div>
      </div>
    </aside>
  </main>

  <div class="timeline-row">
    <div class="grip-cell"><i class="grip"></i></div>
    <div class="timeline">
      <div class="cur">1</div>
      <div class="fr">2</div><div class="fr">4</div><div class="fr">6</div><div class="fr">8</div><div class="fr">10</div><div class="fr">12</div><div class="fr">14</div><div class="fr">16</div><div class="fr">18</div><div class="fr">20</div><div class="fr">22</div><div class="fr">24</div>
    </div>
    <div class="field now sunken">1.00</div>
    <div class="pb">
      <b><svg viewBox="0 0 20 16"><path d="M3 5 V11 M7 8 L10 5 V11Z M12 8 L15 5 V11Z" fill="#999" stroke="#555"/></svg></b>
      <b><svg viewBox="0 0 20 16"><path d="M4 2 V14" stroke="#444" stroke-width="1.600"/><path d="M7 8 L15 2 V14Z" fill="#999" stroke="#666"/></svg></b>
      <b><svg viewBox="0 0 20 16"><path d="M4 1 V15" stroke="#8a3a3a" stroke-width="1.600"/><path d="M7 8 L15 3 V13Z" fill="#aaa" stroke="#888"/></svg></b>
      <b><svg viewBox="0 0 20 16"><path d="M3 8 L16 0 V16Z" fill="#999" stroke="#888"/></svg></b>
      <b><svg viewBox="0 0 20 16"><path d="M17 8 L4 0 V16Z" fill="#888" stroke="#555"/></svg></b>
      <b><svg viewBox="0 0 20 16"><path d="M16 1 V15" stroke="#8a3a3a" stroke-width="1.600"/><path d="M13 8 L5 3 V13Z" fill="#999" stroke="#666"/></svg></b>
      <b><svg viewBox="0 0 20 16"><path d="M16 2 V14" stroke="#444" stroke-width="1.600"/><path d="M13 8 L5 2 V14Z" fill="#999" stroke="#555"/></svg></b>
      <b><svg viewBox="0 0 20 16"><path d="M17 5 V11 M13 8 L10 5 V11Z M8 8 L5 5 V11Z" fill="#999" stroke="#555"/></svg></b>
    </div>
  </div>

  <div class="range-row">
    <div class="grip-cell"><i class="grip"></i></div>
    <div class="field f68 sunken">1.00</div>
    <div class="field f68 sunken">1.00</div>
    <div class="slider">
      <div class="slide-on"><i class="hd"></i><span>1</span><i class="flex1"></i><span>24</span><i class="hd"></i></div>
    </div>
    <div class="field f66 sunken">24.00</div>
    <div class="field f64 sunken">48.00</div>
    <b class="r-arrow"><i class="tri big-tri"></i></b>
    <div class="charset sunken-soft">No Character Set</div>
    <b class="keybtn"><svg viewBox="0 0 24 18"><path d="M1 7 H13 V11 H11 V15 H8 V11 H6 V15 H3 V11 H1Z" fill="#fff"/><circle cx="18" cy="9" r="4.500" fill="none" stroke="#fff" stroke-width="2.400"/></svg></b>
    <b class="cbtn"><svg viewBox="0 0 16 16"><rect x="1" y="1" width="14" height="14" fill="#fff" stroke="#111" stroke-width="1.600"/><path d="M3 8 L7 4 L13 7 L9 12 L4 11Z M5 6 L11 11" fill="none" stroke="#111" stroke-width="1.200"/></svg></b>
  </div>

  <div class="cmd-row">
    <div class="grip-cell"><i class="grip"></i></div>
    <b class="mel">MEL</b>
    <div class="cmd-in"></div>
    <div class="cmd-out"></div>
    <b class="cbtn w-btn"><svg viewBox="0 0 16 16"><rect x="1" y="1" width="14" height="14" fill="#fff" stroke="#111" stroke-width="1.600"/><path d="M1 6 H15" stroke="#111" stroke-width="2"/></svg></b>
  </div>

  <div class="wm" aria-hidden="true">
    <svg class="wm-logo" viewBox="0 0 52 52"><circle cx="26" cy="26" r="21" fill="none" stroke="#9a9a9a" stroke-width="4.500" opacity=".8"/><circle cx="26" cy="26" r="15" fill="none" stroke="#cfcfcf" stroke-width="2"/><text x="26" y="33" class="wm-m">M</text></svg>
    <span class="wm-txt">人人素材</span>
  </div>
</div>
</body>
</html>
```
FILE: styles.css
```css
* { box-sizing: border-box; }
html, body { margin: 0; padding: 0; }
body { width: 1284px; height: 996px; overflow: hidden; background: #e0ddd4; font-family: "Liberation Sans", "Noto Sans", sans-serif; font-size: 11.5px; color: #333; }
.defs { display: block; width: 0; height: 0; }
i, b { font-style: normal; font-weight: normal; display: block; }
.mono { font-family: "Liberation Mono", monospace; font-size: 13.33px; color: #3a3a3a; white-space: pre; }
.app { position: relative; width: 1284px; height: 996px; display: grid; grid-template-rows: 23px 24px 33px 22px 41px 764px 31px 28px 25px 5px; overflow: hidden; }
.app::after { content: ""; position: absolute; right: 0; top: 0; bottom: 0; width: 3px; background: #4476ab; }

.title { display: flex; align-items: center; background: linear-gradient(90deg, #2b4983 0%, #466aa4 35%, #7a9cd0 62%, #a9cdf5 100%); padding-left: 2px; }
.title-logo { width: 20px; height: 20px; flex: none; }
.title-text { margin-left: 3px; padding-top: 3px; font: bold 15px "Liberation Mono", monospace; color: #fff; white-space: pre; }
.win-btns { margin-left: auto; margin-right: 6px; display: flex; gap: 2px; }
.win-btn { width: 20px; height: 18px; background: #dcd9d0; border: 1px solid; border-color: #fff #666 #666 #fff; display: block; }
.win-btn svg { display: block; width: 100%; height: 100%; }

.menubar { display: flex; gap: 16px; padding: 3px 0 0 7px; align-items: center; background: #e0ddd4; }

.grip-cell { display: flex; justify-content: center; }
.grip { display: block; width: 3px; height: 100%; background: repeating-linear-gradient(#7a7a72 0 1px, transparent 1px 3px); }

.status { display: grid; grid-template-columns: 12px 95px 16px 20px 32px 24px 14px 16px 93px 16px 24px 28px 24px 14px 16px 4px repeat(8, 26px) 31px 22px 14px 24px 28px 24px 28px 28px 12px 28px 26px 24px 14px 26px 30px 26px 30px 8px 39px 84px 26px 28px 28px; align-items: center; }
.status .grip-cell { height: 33px; }
.c { display: flex; align-items: center; justify-content: center; min-width: 0; }
.ic { width: 20px; height: 20px; display: block; flex: none; }
.ic-l { width: 25px; height: 25px; display: block; flex: none; }
.ic-s { width: 16px; height: 16px; display: block; flex: none; }
.sep { display: block; width: 1px; height: 26px; background: #111; }
.sep::before { content: ""; display: block; width: 5px; height: 7px; background: #111; margin: 10px 0 0 -2px; }
.sunken { border: 2px solid; border-color: #6e6e6a #f4f3ee #f4f3ee #6e6e6a; background: #fff; }
.sunken-soft { border: 2px solid; border-color: #8a8a84 #f0efe8 #f0efe8 #8a8a84; background: #e0ddd4; }
.combo { height: 26px; display: flex; align-items: center; justify-content: space-between; padding-left: 3px; }
.combo-btn { width: 20px; height: 100%; background: #e0ddd4; border-left: 1px solid #fff; display: flex; align-items: center; justify-content: center; }
.tri { display: block; width: 0; height: 0; border: 5px solid transparent; border-top: 5px solid #111; border-bottom: 0; flex: none; }
.obj { margin-left: 3px; height: 26px; line-height: 14px; padding-left: 1px; }
.tg, .tgb, .tg2 { display: flex; align-items: center; justify-content: center; border: 1px solid; border-color: #f6f5f0 #a8a69c #a8a69c #f6f5f0; height: 26px; }
.tg { width: 24px; }
.rv { gap: 2px; justify-content: flex-start; padding-left: 5px; }
.quick { height: 25px; margin-left: 1px; }

.tabsrow { display: flex; position: relative; }
.tabsrow .grip-cell { width: 12px; height: 22px; }
.tabs { margin-left: 25px; display: grid; grid-template-columns: 60px 44px 48px 71px 57px 42px 42px 50px 41px 70px 55px 61px 49px 54px 42px 43px; }
.tab { padding: 3px 0 0 6px; border-right: 1px solid #777; white-space: nowrap; border-bottom: 1px solid #f4f3ee; height: 22px; line-height: 15px; }
.tab.active { background: #e8e6de; border-top: 1px solid #fff; border-left: 1px solid #fff; border-bottom: 0; padding: 2px 0 0 5px; line-height: 14px; }
.trash { width: 14px; height: 16px; margin-left: auto; margin-right: 8px; align-self: flex-start; }

.shelfrow { display: flex; }
.shelfrow .grip-cell { width: 12px; height: 41px; }
.shelf-menu { width: 24px; margin-top: 7px; display: flex; flex-direction: column; border-left: 1px solid #fff; }
.shelf-a { height: 16px; background: #e6e4dc; border-top: 1px solid #fff; border-right: 1px solid #888; }
.shelf-a::before { content: ""; display: block; width: 14px; height: 7px; margin: 4px 0 0 4px; background: #fafafa; border-right: 1px solid #555; border-radius: 3px 3px 0 0; }
.shelf-b { height: 16px; display: flex; align-items: center; justify-content: center; border-top: 1px solid #888; border-right: 1px solid #888; }
.shelf { width: 1206px; margin-left: 4px; height: 38px; display: flex; padding: 2px 0 0 2px; border: 1px solid; border-color: #777 #f4f3ee #f4f3ee #777; border-top-width: 2px; border-left-width: 2px; background: #e0ddd4; overflow: hidden; }
.si { width: 32px; height: 32px; margin-right: 2px; flex: none; background: #c9c9c6; display: block; }
.run-blue { color: #3a6ea8; }
.run-green { color: #8aa84a; }
.run-navy { color: #5a6eb8; }
.run-purple { color: #a88ad8; }
.shelf-scroll { margin: 3px 0 0 6px; display: flex; flex-direction: column; gap: 1px; width: 20px; }
.up-btn { display: flex; align-items: center; justify-content: center; width: 18px; height: 16px; background: #e0ddd4; border: 1px solid; border-color: #f6f5f0 #8a8a84 #8a8a84 #f6f5f0; flex: none; }
.tri-u, .tri-d, .tri-l, .tri-r { display: block; width: 0; height: 0; border: 5px solid transparent; }
.tri-u { border-bottom: 5px solid #999; border-top: 0; }
.tri-d { border-top: 5px solid #999; border-bottom: 0; }
.tri-l { border-right: 6px solid #111; border-left: 0; }
.tri-r { border-left: 6px solid #111; border-right: 0; }

.main { display: flex; min-height: 0; }
.tools { width: 40px; flex: none; padding: 13px 0 0 2px; display: flex; flex-direction: column; }
.tool { width: 34px; height: 34px; background: #c8c8c4; padding: 0; flex: none; border-bottom: 1px solid #eee; }
.tool svg { display: block; width: 100%; height: 100%; }
.tool.sel { border: 2px solid #1c1c7a; height: 33px; }
.layouts { margin-top: 8px; display: flex; flex-direction: column; gap: 2px; width: 34px; }
.lay { height: 32px; border: 1px solid #222; background: #c8c8c4; padding: 1px; display: flex; }
.lay svg { display: block; width: 100%; height: 100%; }
.grid4 { display: grid; grid-template-columns: 1fr 1fr; grid-template-rows: 1fr 1fr; gap: 1px; background: #222; }
.pl { background: #c8c8c4; overflow: hidden; }
.cross { background: linear-gradient(#111, #111) center / 1px 11px no-repeat, linear-gradient(#111, #111) center / 11px 1px no-repeat, #c8c8c4; }
.two-h { gap: 1px; background: #222; }
.two-h i { flex: 1; background: #c8c8c4; min-width: 0; }
.white-l { background: #fff !important; }
.dark-l { background: #222 !important; flex: 1.2 !important; }
.two-v { flex-direction: column; gap: 1px; background: #222; }
.two-v i { flex: 1; background: #c8c8c4; min-height: 0; }
.wh { background: #eee !important; }
.sub-h { display: flex; }
.sub-h > svg { width: 50%; }
.black-box { flex: 1; background: #111; }
.lay-arrows { display: flex; gap: 2px; margin-top: 1px; }
.lay-arrows b { flex: 1; height: 31px; background: #dcdad0; border: 1px solid; border-color: #fff #888 #888 #fff; display: flex; align-items: center; justify-content: center; }
.tri-s { display: block; width: 0; height: 0; border: 3px solid transparent; border-top: 3px solid #111; border-bottom: 0; }
.logo { margin-top: auto; margin-bottom: 3px; width: 33px; height: 33px; border: 1px solid #555; margin-left: 1px; }
.logo svg { display: block; width: 100%; height: 100%; }

.outliner { width: 201px; flex: none; border-left: 1px solid #8c8c86; border-right: 1px solid #8c8c86; padding: 7px 0 0 3px; display: flex; flex-direction: column; margin-right: 4px; }
.pmenu { display: flex; gap: 10px; height: 24px; align-items: center; padding-left: 3px; flex: none; }
.out-menu { height: 22px; padding-top: 3px; }
.filter { display: flex; align-items: center; height: 24px; gap: 2px; border-top: 2px solid #888; flex: none; margin-right: 3px; }
.filter-ic { width: 20px; height: 20px; margin-left: 3px; }
.filter-in { flex: 1; height: 20px; margin-right: 2px; margin-left: 1px; }
.listbox { position: relative; height: 672px; margin-top: 4px; width: 191px; background: #fff; border: 1px solid #333; border-right-color: #eee; border-bottom-color: #fff; overflow: hidden; flex: none; }
.rows { display: flex; flex-direction: column; width: 189px; overflow: hidden; }
.row { display: flex; align-items: center; height: 20px; flex: none; font-family: "Noto Sans", sans-serif; font-size: 12px; position: relative; }
.nx, .ex { display: block; width: 10px; height: 10px; margin-left: 2px; flex: none; position: relative; }
.ex { border: 1px solid #111; }
.ex::before { content: ""; position: absolute; left: 1px; right: 1px; top: 3px; height: 1px; background: #111; }
.plus::after { content: ""; position: absolute; top: 1px; bottom: 1px; left: 3px; width: 1px; background: #111; }
.ri { width: 21px; height: 21px; margin-left: 20px; flex: none; overflow: visible; }
.nm { white-space: nowrap; color: #3a3a3a; padding-bottom: 2px; }
.d0 .nm { margin-left: 10px; }
.d1 .nm { margin-left: 30px; }
.d2 .nm { margin-left: 50px; }
.d3 .nm { margin-left: 70px; }
.blue { color: #3a3a7a !important; }
.green { background: #b9fbb3; }
.picked { background: #a8a8a8; }
.picked .nm { color: #fff; }
.tree { position: absolute; left: 0; top: 0; width: 189px; height: 600px; pointer-events: none; }
.hscroll { display: flex; height: 21px; margin-top: 3px; width: 187px; margin-left: 3px; flex: none; }
.hscroll .up-btn { width: 19px; height: 21px; }
.hscroll .thumb { width: 19px; height: 21px; background: #e0ddd4; border: 1px solid; border-color: #fff #8a8a84 #8a8a84 #fff; }
.track { flex: 1; background: repeating-conic-gradient(#fff 0 25%, #d8d6cd 0 50%) 0 0 / 2px 2px; }
.foot-line { height: 1px; background: #333; margin: 4px 4px 0 2px; }

.viewport { width: 782px; flex: none; display: flex; flex-direction: column; background: #1f3675; padding: 3px 2px 3px 3px; height: 759px; margin-top: 3px; }
.pmenu.wide { height: 23px; background: #e0ddd4; padding: 3px 0 0 5px; }
.view3d { display: block; width: 777px; height: 730px; background: #ababab; flex: none; overflow: hidden; }
.ay { fill: #3be03b; font: bold 14px "Liberation Serif", serif; }
.az { fill: #2222c8; font: bold 14px "Liberation Serif", serif; }
.ar { fill: #e82a2a; font: bold 14px "Liberation Serif", serif; }
.big { font-size: 13px; }
.persp { fill: #1f5a3a; font: bold 10px "Liberation Mono", monospace; letter-spacing: 1px; }

.right { flex: none; width: 250px; margin-left: 3px; padding-top: 3px; display: flex; flex-direction: column; height: 764px; }
.grip-h { height: 3px; flex: none; background: repeating-linear-gradient(90deg, #7a7a72 0 1px, transparent 1px 3px); margin-bottom: 2px; }
.cb-tools { display: flex; align-items: center; gap: 2px; height: 27px; flex: none; padding: 0 1px; }
.cb-tools .ic:first-child { margin-right: 1px; }
.tg2 { width: 22px; height: 25px; }
.fill { flex: 1; }
.rbs { display: flex; }
.rb { display: flex; align-items: center; justify-content: center; width: 22px; height: 25px; border: 1px solid; border-color: #f6f5f0 #a8a69c #a8a69c #f6f5f0; background: #d9d7ce; }
.cb-menu { border-top: 1px solid #333; border-bottom: 1px solid #777; height: 26px; padding: 2px 0 0 5px; flex: none; }
.cb { height: 339px; flex: none; margin: 1px 3px 0; border: 1px solid #888; border-top-color: #666; padding: 4px 1px 0 1px; display: flex; flex-direction: column; }
.cb-head { height: 16px; background: #d4d3cd; font-weight: 700; padding-left: 2px; line-height: 15px; }
.ch { display: grid; grid-template-columns: 173px 1fr; height: 16px; line-height: 15px; flex: none; }
.ch label { text-align: right; padding-right: 3px; }
.ch span { background: #fff; padding-left: 2px; margin-left: 1px; border-bottom: 1px solid #e8e8e4; }
.hot label { background: #111; color: #fff; }
.last { border-bottom: 1px solid #111; height: 16px; }
.cb-sec { height: 16px; font-weight: 700; padding-left: 2px; line-height: 15px; }
.cb-shape { height: 16px; background: #d4d3cd; font-weight: 700; padding-left: 11px; line-height: 15px; border-bottom: 1px solid #111; }
.cb-item { height: 16px; font-weight: 700; padding-left: 11px; line-height: 15px; }
.layers { display: flex; flex-direction: column; margin-top: 4px; border-top: 1px solid #333; flex: 1; min-height: 0; }
.radios { display: flex; gap: 14px; height: 26px; padding: 3px 0 0 5px; align-items: center; }
.rad { display: flex; align-items: center; gap: 7px; }
.rad::before { content: ""; width: 12px; height: 12px; border-radius: 50%; background: #fff; border: 1px solid #555; box-shadow: inset 0 0 0 3px #fff; }
.rad.on::before { background: #111; }
.ly-menu { height: 24px; padding: 3px 0 0 5px; border-bottom: 1px solid #777; }
.ly-tool { height: 27px; display: flex; justify-content: flex-end; padding: 2px 4px 0 0; }
.newlayer { width: 25px; height: 25px; padding: 1px; }
.newlayer svg { width: 100%; height: 100%; }
.ly-list { height: 260px; margin: 0 6px 0 4px; border: 2px solid; border-color: #777 #f4f3ee #f4f3ee #777; display: flex; flex: none; }
.ly-main { flex: 1; }
.ly-row { height: 20px; background: #4a90d4; color: #fff; display: flex; align-items: center; gap: 4px; padding-left: 2px; font-size: 12px; }
.cell { width: 16px; height: 17px; border: 1px solid; border-color: #2a6aa8 #cfe4f8 #cfe4f8 #2a6aa8; text-align: center; line-height: 15px; font-size: 12px; color: #fff; }
.swatch { width: 15px; height: 15px; background: #0000f0; border: 1px solid #cfe4f8; margin-left: 1px; }
.ly-row span { margin-left: -1px; }
.vscroll { width: 18px; display: flex; flex-direction: column; }
.vscroll .up-btn { height: 18px; }
.vscroll .track { flex: 1; }
.pager { height: 14px; margin-top: 7px; display: flex; gap: 2px; text-align: center; line-height: 12px; flex: none; }
.pager b { flex: 1; border: 1px solid; border-color: #fff #8a8a84 #8a8a84 #fff; }

.timeline-row { display: flex; align-items: stretch; height: 31px; }
.timeline-row .grip-cell { width: 10px; flex: none; }
.timeline { width: 970px; flex: none; display: flex; padding: 0 0 0 6px; overflow: hidden; border-top: 3px solid #a8a69c; border-bottom: 2px solid #f6f5f0; border-left: 1px solid #999; }
.cur { width: 39px; flex: none; background: #3a404c; color: #e8e8e8; font: 13px "Liberation Serif", serif; padding: 12px 0 0 8px; }
.fr { width: 80px; flex: none; font: bold 13px "Liberation Serif", serif; color: #111; padding-left: 8px; line-height: 13px; background: linear-gradient(#111, #111) 0 100% / 2px 12px no-repeat; }
.field { height: 24px; line-height: 19px; padding-left: 1px; flex: none; }
.now { width: 66px; margin: 3px 3px 0 5px; height: 23px; }
.pb { display: flex; margin-top: 2px; height: 25px; }
.pb b { width: 26px; margin-right: 2px; border: 1px solid; border-color: #f6f5f0 #a8a69c #a8a69c #f6f5f0; display: flex; align-items: center; justify-content: center; }
.pb svg { width: 20px; height: 16px; display: block; }

.range-row { display: flex; align-items: center; gap: 3px; height: 28px; }
.range-row .grip-cell { width: 6px; height: 28px; }
.f68 { width: 68px; }
.f66 { width: 66px; }
.f64 { width: 64px; margin-left: 1px; }
.slider { width: 807px; height: 22px; margin: 0 0 0 2px; flex: none; background: #aaa89e; border: 1px solid #aaa89e; }
.slide-on { width: 404px; height: 20px; background: #dcdad0; display: flex; align-items: center; padding: 0 2px 0 5px; color: #fff; gap: 5px; border: 1px solid; border-color: #f6f5f0 #a8a69c #a8a69c #f6f5f0; }
.hd { width: 10px; height: 14px; background: #dcdad0; border: 1px solid #888; }
.flex1 { flex: 1; }
.r-arrow { width: 24px; height: 24px; border: 1px solid; border-color: #fff #8a8a84 #8a8a84 #fff; display: flex; align-items: center; justify-content: center; margin-left: 1px; }
.big-tri { border-width: 7px; border-top-width: 8px; }
.charset { width: 98px; height: 24px; margin-left: -2px; padding-left: 1px; line-height: 19px; white-space: nowrap; overflow: hidden; }
.keybtn { width: 25px; height: 24px; margin-left: 3px; background: #c8201f; padding: 3px 1px; }
.keybtn svg { display: block; width: 100%; height: 100%; }
.cbtn { width: 18px; height: 20px; padding: 2px 1px; border: 1px solid #f6f5f0; }
.cbtn svg { display: block; width: 100%; height: 100%; }

.cmd-row { display: flex; align-items: center; height: 25px; }
.cmd-row .grip-cell { width: 10px; height: 25px; }
.mel { width: 50px; font-weight: 700; text-align: center; font-size: 11px; }
.cmd-in { width: 606px; height: 23px; background: #fff; border-top: 2px solid #111; border-left: 1px solid #111; }
.cmd-out { width: 587px; margin-left: 1px; height: 23px; background: #9daab5; border-top: 2px solid #111; border-left: 1px solid #111; }
.w-btn { margin-left: 6px; }

.wm { position: absolute; left: 548px; top: 938px; display: flex; align-items: center; gap: 2px; opacity: .85; }
.wm-logo { width: 50px; height: 50px; flex: none; }
.wm-m { font: bold 22px "Liberation Sans", sans-serif; fill: #5f95c4; text-anchor: middle; }
.wm-txt { font: 700 32px "Noto Sans CJK SC", sans-serif; color: #9c9c9c; letter-spacing: 2px; text-shadow: 1px 1px 0 #eee; white-space: nowrap; }
```
